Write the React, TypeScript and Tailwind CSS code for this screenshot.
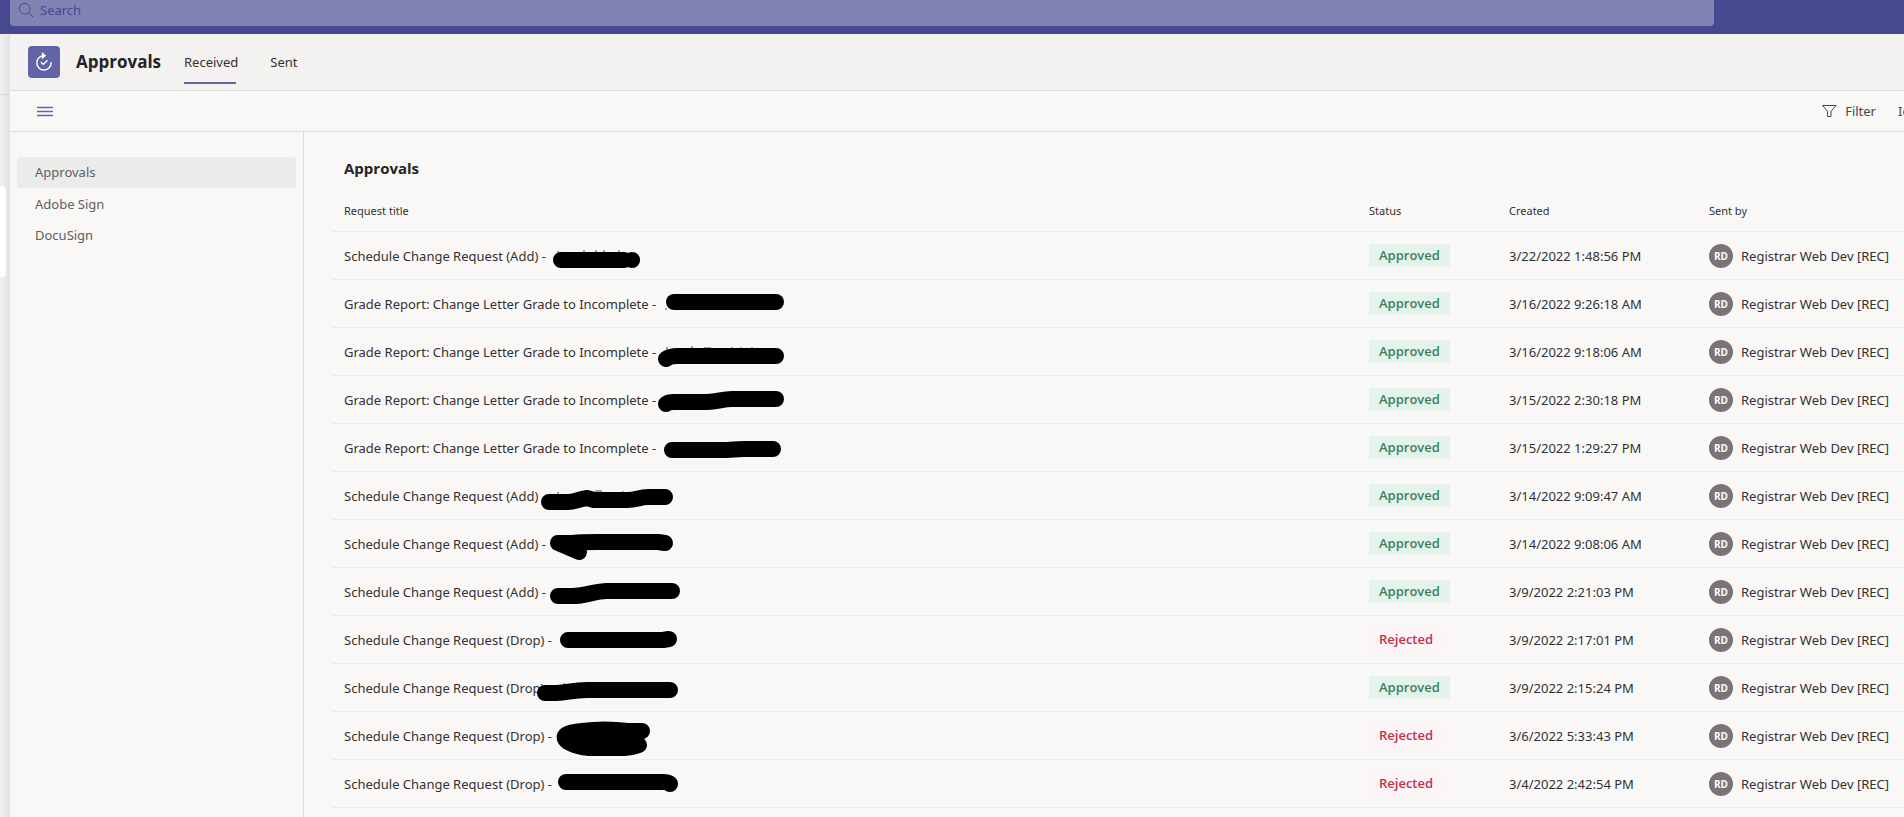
type Status = "Approved" | "Rejected";

interface ApprovalRequest {
  id: number;
  title: string;
  status: Status;
  created: string;
  // marker stroke that covers the student's name
  marker: string;
  // letter tops that stick out above the marker
  specks?: string;
}

const requests: ApprovalRequest[] = [
  {
    id: 1,
    title: "Schedule Change Request (Add) -",
    status: "Approved",
    created: "3/22/2022 1:48:56 PM",
    marker: "M229 28H292M300 28h0.1",
    specks: "M226 19v2M252 18v2M264 18v2M272 18v2M287 18v2",
  },
  {
    id: 2,
    title: "Grade Report: Change Letter Grade to Incomplete -",
    status: "Approved",
    created: "3/16/2022 9:26:18 AM",
    marker: "M342 22H444",
    specks: "M333 29h2",
  },
  {
    id: 3,
    title: "Grade Report: Change Letter Grade to Incomplete -",
    status: "Approved",
    created: "3/16/2022 9:18:06 AM",
    marker: "M334 31Q338 28 346 28H444",
    specks: "M335 19v3M360 18v2M372 20h7M400 19v2M409 19v2M420 19v2",
  },
  {
    id: 4,
    title: "Grade Report: Change Letter Grade to Incomplete -",
    status: "Approved",
    created: "3/15/2022 2:30:18 PM",
    marker: "M334 28Q336 26 342 26H375C386 26 390 23 400 23H444",
  },
  {
    id: 5,
    title: "Grade Report: Change Letter Grade to Incomplete -",
    status: "Approved",
    created: "3/15/2022 1:29:27 PM",
    marker: "M340 26H395C402 26 402 25 412 25H441",
  },
  {
    id: 6,
    title: "Schedule Change Request (Add)",
    status: "Approved",
    created: "3/14/2022 9:09:47 AM",
    marker: "M217 30H236C243 30 246 27 255 26L262 28H295C305 28 307 25 316 25H333",
    specks: "M226 20v3M263 19h7M291 19v2",
  },
  {
    id: 7,
    title: "Schedule Change Request (Add) -",
    status: "Approved",
    created: "3/14/2022 9:08:06 AM",
    marker: "M247 32L226 23H240C250 22 254 22 265 22H326L333 23M238 25L247 28",
  },
  {
    id: 8,
    title: "Schedule Change Request (Add) -",
    status: "Approved",
    created: "3/9/2022 2:21:03 PM",
    marker: "M226 28H240C255 28 262 23 275 23H340",
  },
  {
    id: 9,
    title: "Schedule Change Request (Drop) -",
    status: "Rejected",
    created: "3/9/2022 2:17:01 PM",
    marker: "M236 24H331L337 23",
  },
  {
    id: 10,
    title: "Schedule Change Request (Drop)",
    status: "Approved",
    created: "3/9/2022 2:15:24 PM",
    marker: "M213 29H225C235 29 240 26 255 26H338",
    specks: "M232 19v2",
  },
  {
    id: 11,
    title: "Schedule Change Request (Drop) -",
    status: "Rejected",
    created: "3/6/2022 5:33:43 PM",
    marker:
      "M310 19H296C280 17 265 17 250 19C235 20 228 24 236 30C246 36 256 36 265 36H293C300 36 304 34 307 33M250 27H300",
  },
  {
    id: 12,
    title: "Schedule Change Request (Drop) -",
    status: "Rejected",
    created: "3/4/2022 2:42:54 PM",
    marker: "M234 22H331C335 22 338 23 338 24",
  },
];

const providers = ["Approvals", "Adobe Sign", "DocuSign"];

const TopBar = () => (
  <div className="h-[34px] bg-[#464890] pr-[190px] pl-2.5">
    <div className="flex h-[26px] items-start rounded-b bg-[#8282b4] pl-2">
      <svg className="mt-0.5 h-4 w-4 shrink-0" viewBox="0 0 16 16" fill="none" stroke="#464890">
        <circle cx="6.7" cy="6.7" r="5.4" />
        <path d="M10.6 10.6L15 15" />
      </svg>
      <input
        type="text"
        aria-label="Search"
        placeholder="Search"
        className="ml-1.5 h-5 flex-1 bg-transparent text-[13px] leading-5 outline-none placeholder:text-[#464890]"
      />
    </div>
  </div>
);

const AppHeader = () => (
  <header className="flex h-[57px] items-center border-b border-[#dddcdb] bg-[#f3f2f1] pl-[18px]">
    <div className="flex h-8 w-8 items-center justify-center rounded-sm bg-[#6264a7]">
      <svg className="h-5 w-5" viewBox="0 0 20 20" fill="none" stroke="#fff" strokeWidth="1.4" strokeLinecap="round">
        <path d="M17.2 10.6A7.2 7.2 0 1 1 10 3.6" />
        <path d="M8.6 1.6L11 3.7L8.6 5.8Z" fill="#fff" />
        <path d="M7.2 10.6L9.2 12.4L13 8.8" />
      </svg>
    </div>
    <h1 className="ml-4 w-[108px] font-['Open_Sans'] text-[17px] leading-6 font-bold text-[#242424]">Approvals</h1>
    <nav className="flex h-8 items-start gap-8 text-[13px] leading-5 text-[#323130]">
      <a href="#received" className="h-[38px] pt-1.5">
        Received
        <span className="mt-2.5 block h-0.5 w-[52px] bg-[#6264a7]" />
      </a>
      <a href="#sent" className="pt-1.5">
        Sent
      </a>
    </nav>
  </header>
);

const Toolbar = () => (
  <div className="flex h-[41px] items-center justify-between overflow-hidden border-b border-[#dddcdb] pl-[27px] text-[13px] leading-5 text-[#484644]">
    <button type="button" aria-label="Toggle menu">
      <svg className="h-4 w-4" viewBox="0 0 16 16" fill="none" stroke="#6264a7" strokeWidth="1.4">
        <path d="M0 4.5H16M0 8.5H16M0 12.5H16" />
      </svg>
    </button>
    <div className="flex items-center">
      <button type="button" className="flex items-center gap-2">
        <svg className="h-4 w-4" viewBox="0 0 16 16" fill="none" stroke="#484644">
          <path d="M1.5 2.5H15L10 8.3V13.5H6.5V8.3Z" />
        </svg>
        Filter
      </button>
      <button type="button" className="ml-[22px] w-1.5 overflow-hidden text-left whitespace-nowrap">
        Ic
      </button>
    </div>
  </div>
);

const Sidebar = () => (
  <aside className="w-[294px] shrink-0 border-r border-[#dddcdb] px-[7px] pt-[25px]">
    <ul>
      {providers.map((name) => (
        <li key={name}>
          <a
            href="#provider"
            className={
              name === "Approvals"
                ? "mb-px block rounded-sm bg-[#ebebeb] px-[18px] text-[13px] leading-[31px] text-[#605e5c]"
                : "block rounded-sm px-[18px] text-[13px] leading-[31px] text-[#605e5c]"
            }
          >
            {name}
          </a>
        </li>
      ))}
    </ul>
  </aside>
);

const StatusBadge = ({ status }: { status: Status }) => (
  <span
    className={
      status === "Approved"
        ? "block w-fit bg-[#e4f4ec] px-2.5 font-['Open_Sans'] text-[13px] leading-[23px] font-semibold text-[#3a805c]"
        : "block w-fit bg-[#fcf4f6] px-2.5 font-['Open_Sans'] text-[13px] leading-[23px] font-semibold text-[#c4314b]"
    }
  >
    {status}
  </span>
);

const RequestTable = () => (
  <table className="w-full table-fixed border-separate border-spacing-0 text-left text-[13px] leading-5 text-[#323130]">
    <colgroup>
      <col />
      <col className="w-[140px]" />
      <col className="w-[200px]" />
      <col className="w-[195px]" />
    </colgroup>
    <thead>
      <tr className="text-[11px]">
        <th className="h-[42px] border-b border-[#edebe9] pl-3 font-normal">Request title</th>
        <th className="border-b border-[#edebe9] font-normal">Status</th>
        <th className="border-b border-[#edebe9] font-normal">Created</th>
        <th className="border-b border-[#edebe9] font-normal">Sent by</th>
      </tr>
    </thead>
    <tbody>
      {requests.map((item) => (
        <tr key={item.id}>
          <td className="relative h-12 border-b border-[#edebe9] pl-3">
            {item.title}
            <svg
              className="absolute top-0 left-0 h-12 w-[480px]"
              viewBox="0 0 480 48"
              fill="none"
              stroke="#000"
              aria-hidden="true"
            >
              {item.specks && <path d={item.specks} stroke="#484644" />}
              <path d={item.marker} strokeWidth="16" strokeLinecap="round" strokeLinejoin="round" />
            </svg>
          </td>
          <td className="border-b border-[#edebe9]">
            <StatusBadge status={item.status} />
          </td>
          <td className="border-b border-[#edebe9]">{item.created}</td>
          <td className="border-b border-[#edebe9]">
            <div className="flex items-center gap-2 whitespace-nowrap">
              <span className="flex h-6 w-6 items-center justify-center rounded-full bg-[#7a7574] font-['Open_Sans'] text-[10px] font-bold text-white">
                RD
              </span>
              Registrar Web Dev [REC]
            </div>
          </td>
        </tr>
      ))}
    </tbody>
  </table>
);

const App = () => {
  return (
    <div className="flex h-screen flex-col overflow-hidden bg-[#f9f8f7] font-['Noto_Sans','Open_Sans',sans-serif]">
      <TopBar />
      <div className="flex min-h-0 flex-1">
        {/* Edge of the chat pane */}
        <div className="w-2.5 shrink-0 bg-linear-to-r from-[#f0f0f0] to-[#e2e2e2]">
          <div className="h-[61px] border-b border-[#d6d6d6]" />
          <div className="mt-[91px] h-[91px] w-1.5 rounded-r bg-white" />
        </div>

        <div className="flex min-w-0 flex-1 flex-col">
          <AppHeader />
          <Toolbar />
          <div className="flex min-h-0 flex-1">
            <Sidebar />
            <main className="min-w-0 flex-1 overflow-hidden pt-6 pl-7">
              <h2 className="mb-2.5 pl-3 font-['Open_Sans'] text-[15px] leading-6 font-bold text-[#242424]">
                Approvals
              </h2>
              <RequestTable />
            </main>
          </div>
        </div>
      </div>
    </div>
  );
};

export default App;
